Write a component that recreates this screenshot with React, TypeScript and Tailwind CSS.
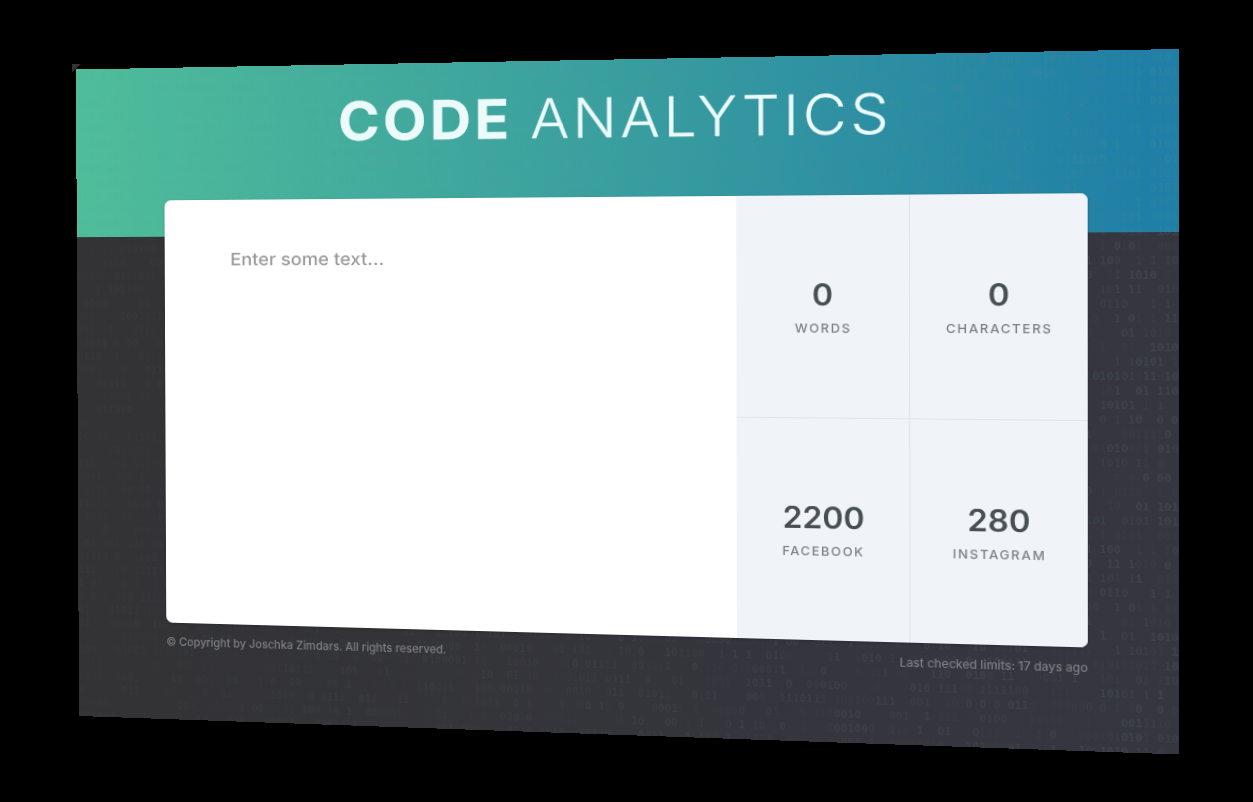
import React from "react";

const WIDTH = 1100;
const HEIGHT = 680;

type Point = [number, number];

/** Matrix that maps a WIDTH x HEIGHT box onto the given corners (tl, tr, br, bl). */
function perspective([p0, p1, p2, p3]: Point[]): string {
  const dx1 = p1[0] - p2[0];
  const dx2 = p3[0] - p2[0];
  const sx = p0[0] - p1[0] + p2[0] - p3[0];
  const dy1 = p1[1] - p2[1];
  const dy2 = p3[1] - p2[1];
  const sy = p0[1] - p1[1] + p2[1] - p3[1];
  const den = dx1 * dy2 - dx2 * dy1;
  const g = (sx * dy2 - dx2 * sy) / den;
  const h = (dx1 * sy - sx * dy1) / den;
  const m = [
    (p1[0] - p0[0] + g * p1[0]) / WIDTH, (p1[1] - p0[1] + g * p1[1]) / WIDTH, 0, g / WIDTH,
    (p3[0] - p0[0] + h * p3[0]) / HEIGHT, (p3[1] - p0[1] + h * p3[1]) / HEIGHT, 0, h / HEIGHT,
    0, 0, 1, 0,
    p0[0], p0[1], 0, 1,
  ];
  return `matrix3d(${m.map((n) => n.toFixed(10)).join(",")})`;
}

const transform = perspective([[76, 69.5], [1179, 49], [1179, 754.5], [79, 716]]);

function random(seed: number) {
  let s = seed;
  return () => {
    s = (s * 1664525 + 1013904223) % 4294967296;
    return s / 4294967296;
  };
}

const COLUMNS = 154;
const edge = [
  "01  0101 101", " 1 0101  001", " 100  1 1 10", "  11 1010 0 ", " 101 11  010", " 0110   1 1 ",
  "0  1 01 1 11", "    01 1010 ", " 1  01  1010", "   1 10101 1", "010101011 10", " 101  01 110",
  " 10101 1 1  ", " 0 1 10  0 0", "    0011110 ", "01010101 010", " 1010 11 0  ", "   0 0 0 00 ",
  " 1 0110  1 0", "  10  01 101",
];

type Run = { text: string; tone: number };

function makeRow(index: number): Run[] {
  const next = random(index * 7919 + 31);
  let line = "";
  while (line.length < COLUMNS) {
    const len = 2 + Math.floor(next() * 8);
    for (let i = 0; i < len; i++) line += next() > 0.85 ? " " : next() > 0.5 ? "1" : "0";
    line += " ".repeat(1 + Math.floor(next() * 3));
  }
  line = line.slice(0, COLUMNS) + (index >= 12 ? edge[(index - 12) % edge.length] : "10 1101 0101");
  const runs: Run[] = [];
  for (let i = 0; i < line.length; ) {
    const len = 1 + Math.floor(next() * 4);
    runs.push({ text: line.slice(i, i + len), tone: Math.floor(next() * 3) });
    i += len;
  }
  return runs;
}

const rows = Array.from({ length: 49 }, (_, i) => makeRow(i));
const tones = ["opacity-40", "opacity-70", "opacity-100"];

function Binary() {
  return (
    <div
      aria-hidden="true"
      className="absolute inset-0 overflow-hidden whitespace-pre pt-px font-['DejaVu_Sans_Mono',monospace] text-[11px] leading-[14px] font-bold text-[#6f8f85]/16 [mask-image:linear-gradient(to_right,rgba(0,0,0,0.25),rgba(0,0,0,0.6)_50%,#000)]"
    >
      {rows.map((row, i) => (
        <div key={i}>
          {row.map((run, j) => (
            <span key={j} className={tones[run.tone]}>{run.text}</span>
          ))}
        </div>
      ))}
    </div>
  );
}

function Stat({ value, label, className = "" }: { value: string; label: string; className?: string }) {
  return (
    <div className={`flex flex-col items-center justify-center border-[#e0e4e8] pl-[1.5px] ${className}`}>
      <div className="-mt-px scale-x-[1.03] text-[30px] leading-[38px] font-semibold text-[#484f52]">{value}</div>
      <div className="mt-[7px] scale-x-[1.04] text-[12px] leading-[16px] font-medium tracking-[1.5px] text-[#7b8184]">{label}</div>
    </div>
  );
}

export default function App() {
  return (
    <div className="relative h-[802px] w-[1253px] overflow-hidden bg-black font-['Inter',sans-serif]">
      <div className="absolute top-16 left-[72px] h-2 w-[9px] bg-[#333333] [clip-path:polygon(0_0,100%_0,0_100%)]" />
      <div
        className="relative h-[680px] w-[1100px] origin-top-left overflow-hidden bg-linear-to-r from-[#333335] to-[#353640]"
        style={{ transform }}
      >
        <div className="absolute inset-x-0 top-0 h-[176px] bg-[linear-gradient(88deg,#50bd9a,#3a9f9f_50%,#207fa6_97%)]" />
        <Binary />
        <div className="relative flex h-full flex-col pr-[84px] pl-[95px]">
          <h1 className="ml-[183.5px] flex h-[137.5px] origin-left scale-x-[1.06] items-start pt-[24.5px] text-[55px] leading-[67px] font-light tracking-[3.3px] [word-spacing:-2px] whitespace-pre text-[#ecfbfa] [-webkit-text-stroke:0.3px_#ecfbfa]">
            <b className="font-bold">CODE</b> ANALYTICS
          </h1>
          <main className="flex h-[441.5px] shrink-0 overflow-hidden rounded-[7px] bg-white shadow-[0_1px_3px_rgba(0,0,0,0.2)]">
            <textarea
              placeholder="Enter some text..."
              className="mt-[48px] ml-[70px] block w-[400px] flex-none origin-left scale-x-[1.07] resize-none bg-transparent text-[18px] leading-[27px] font-medium text-[#484f52] outline-none placeholder:text-[#969a9d]"
            />
            <div className="ml-auto grid w-[335px] grid-cols-[168px_167px] grid-rows-2 bg-[#f0f4f8] pt-px">
              <Stat value="0" label="WORDS" className="border-r border-b" />
              <Stat value="0" label="CHARACTERS" className="border-b" />
              <Stat value="2200" label="FACEBOOK" className="border-r" />
              <Stat value="280" label="INSTAGRAM" />
            </div>
          </main>
          <footer className="flex justify-between pt-[10.5px] text-[11.6px] leading-[18px] font-medium text-[#7e7f83]">
            <span>© Copyright by Joschka Zimdars. All rights reserved.</span>
            <span>Last checked limits: 17 days ago</span>
          </footer>
        </div>
      </div>
    </div>
  );
}
